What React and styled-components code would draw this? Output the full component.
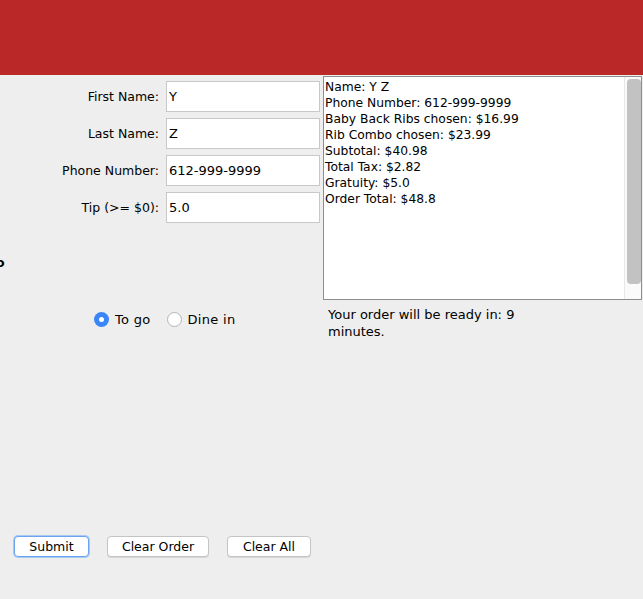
import styled, { createGlobalStyle } from 'styled-components';

const GlobalStyle = createGlobalStyle`
html, body {
margin: 0;
padding: 0;
background: #eeeeee;
}
body {
font-family: "DejaVu Sans", "Liberation Sans", sans-serif;
font-size: 12.5px;
color: #000;
overflow: hidden;
}
`

const Page = styled.div`
width: 643px;
height: 599px;
display: flex;
flex-direction: column;
overflow: hidden;
`

const Header = styled.div`
height: 75px;
background: #ba2828;
flex-shrink: 0;
`

const Main = styled.div`
display: grid;
grid-template-columns: 323px 320px;
`

const LeftCol = styled.div`
display: flex;
flex-direction: column;
`

const Form = styled.div`
display: grid;
grid-template-columns: 159px 154px;
column-gap: 7px;
row-gap: 6px;
padding-top: 6px;
align-items: center;
`

const Label = styled.label`
text-align: right;
white-space: nowrap;
`

const Field = styled.div`
height: 29px;
border: 1px solid #c8c8c8;
background: #fff;
display: flex;
align-items: center;
padding-left: 2px;
font-size: 13px;
`

const Clipped = styled.div`
margin-top: 31px;
margin-left: -4px;
height: 17px;
line-height: 17px;
font-weight: bold;
`

const RadioRow = styled.div`
display: flex;
align-items: center;
gap: 16px;
margin-top: 41px;
padding-left: 94px;
font-size: 13px;
`

const RadioItem = styled.div`
display: flex;
align-items: center;
gap: 6px;
`

const RadioCircle = styled.span`
width: ${p => (p.$on ? '15px' : '13px')};
height: ${p => (p.$on ? '15px' : '13px')};
border-radius: 50%;
box-sizing: content-box;
background: ${p => (p.$on ? '#3b86f7' : '#fff')};
border: ${p => (p.$on ? '0' : '1px solid #b4b4b4')};
display: flex;
align-items: center;
justify-content: center;
&::after {
content: '';
width: 5px;
height: 5px;
border-radius: 50%;
background: #fff;
display: ${p => (p.$on ? 'block' : 'none')};
}
`

const RadioText = styled.span`
letter-spacing: 0.3px;
`

const RightCol = styled.div`
display: flex;
flex-direction: column;
`

const TextArea = styled.div`
margin-top: 1px;
width: 319px;
height: 224px;
box-sizing: border-box;
border: 1px solid #8e8e8e;
background: #fff;
display: flex;
`

const Lines = styled.div`
flex: 1;
padding: 2px 0 0 1px;
line-height: 16px;
font-size: 12.3px;
`

const ScrollTrack = styled.div`
width: 14px;
border-left: 1px solid #e8e8e8;
background: #fafafa;
padding: 2px 0 15px 2px;
display: flex;
`

const Thumb = styled.div`
width: 8px;
background: #c2c2c2;
border-radius: 4px;
flex: 1;
`

const Status = styled.div`
margin-top: 6px;
padding-left: 5px;
width: 200px;
line-height: 17px;
font-size: 13px;
`

const Footer = styled.div`
display: flex;
gap: 18px;
padding-left: 14px;
margin-top: auto;
margin-bottom: 42px;
`

const Button = styled.button`
height: 21px;
width: ${p => p.$w}px;
padding: 0;
border-radius: 4px;
background: #fff;
border: 1px solid ${p => (p.$focus ? '#6aa4ee' : '#c4c4c4')};
box-shadow: ${p => (p.$focus ? '0 0 0 1px #a9c9f3' : '0 1px 0 #d6d6d6')};
font-family: "DejaVu Sans", "Liberation Sans", sans-serif;
font-size: 12.5px;
color: #000;
`

const summary = [
    'Name: Y Z',
    'Phone Number: 612-999-9999',
    'Baby Back Ribs chosen: $16.99',
    'Rib Combo chosen: $23.99',
    'Subtotal: $40.98',
    'Total Tax: $2.82',
    'Gratuity: $5.0',
    'Order Total: $48.8',
]

const fields = [
    ['First Name:', 'Y'],
    ['Last Name:', 'Z'],
    ['Phone Number:', '612-999-9999'],
    ['Tip (>= $0):', '5.0'],
]

function App() {
    return (
        <Page>
            <GlobalStyle />
            <Header />
            <Main>
                <LeftCol>
                    <Form>
                        {fields.map(([label, value]) => [
                            <Label key={label}>{label}</Label>,
                            <Field key={label + 'v'}>{value}</Field>,
                        ])}
                    </Form>
                    <Clipped>o</Clipped>
                    <RadioRow>
                        <RadioItem>
                            <RadioCircle $on />
                            <RadioText>To go</RadioText>
                        </RadioItem>
                        <RadioItem>
                            <RadioCircle />
                            <RadioText>Dine in</RadioText>
                        </RadioItem>
                    </RadioRow>
                </LeftCol>
                <RightCol>
                    <TextArea>
                        <Lines>
                            {summary.map(line => <div key={line}>{line}</div>)}
                        </Lines>
                        <ScrollTrack>
                            <Thumb />
                        </ScrollTrack>
                    </TextArea>
                    <Status>Your order will be ready in: 9 minutes.</Status>
                </RightCol>
            </Main>
            <Footer>
                <Button $w={75} $focus>Submit</Button>
                <Button $w={102}>Clear Order</Button>
                <Button $w={84}>Clear All</Button>
            </Footer>
        </Page>
    );
}

export default App;
